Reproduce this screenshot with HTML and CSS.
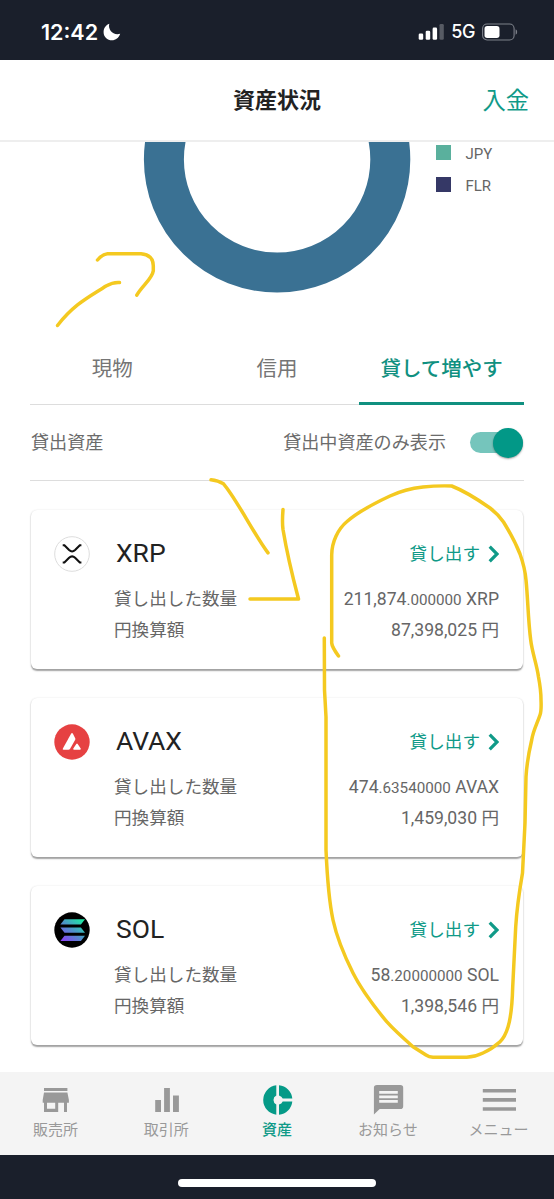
FILE: index.html
```html
<!DOCTYPE html>
<html lang="ja">
<head>
<meta charset="utf-8">
<title>資産状況</title>
<link rel="stylesheet" href="styles.css">
</head>
<body>
<div class="screen">
  <div class="status">
    <div class="clock">12:42
      <svg class="moon" width="18" height="18" viewBox="0 0 18 18"><path d="M6.3.8C4.6 6.8 10.4 13 17.2 10.8 15.8 15 12.6 17.300 9 17.300 4.300 17.300.6 13.700.6 9.200.6 5.300 2.800 2 6.300.8Z" fill="#fff"/></svg>
    </div>
    <div class="signal">
      <svg width="26" height="16" viewBox="0 0 26 16"><g fill="#fff"><rect x=".7" y="9.500" width="4.500" height="6.200" rx="1.300"/><rect x="7.700" y="6.800" width="4.500" height="8.900" rx="1.300"/><rect x="14.600" y="3.600" width="4.500" height="12.100" rx="1.300"/><rect x="21.500" y="0" width="4.300" height="15.700" rx="1.300" opacity=".27"/></g></svg>
      <span class="net">5G</span>
      <svg width="36" height="18" viewBox="0 0 36 18"><rect x=".6" y="1" width="31.500" height="16" rx="4.500" fill="none" stroke="#7d818a" stroke-width="1.100"/><rect x="2.500" y="3" width="15" height="12" rx="2.700" fill="#fff"/><path d="M33.600 6.200q1.600.8 1.600 2.800t-1.600 2.800z" fill="#7d818a"/></svg>
    </div>
  </div>

  <header class="header">
    <h1 class="title">資産状況</h1>
    <span class="deposit">入金</span>
  </header>

  <section class="chart">
    <svg class="donut" width="268" height="152" viewBox="143 142 268 152"><circle cx="277.100" cy="159.400" r="113.200" fill="none" stroke="#3a7193" stroke-width="40"/></svg>
    <ul class="legend">
      <li class="key"><i class="swatch jpy"></i>JPY</li>
      <li class="key"><i class="swatch flr"></i>FLR</li>
    </ul>
  </section>

  <nav class="tabs">
    <span class="tab">現物</span><span class="tab">信用</span><span class="tab active">貸して増やす</span>
  </nav>

  <div class="filter">
    <span class="caption">貸出資産</span>
    <span class="caption only">貸出中資産のみ表示</span>
    <span class="toggle"><i class="knob"></i></span>
  </div>

  <main class="cards">
    <article class="card">
      <svg class="coin" width="36" height="36" viewBox="0 0 36 36"><circle cx="18" cy="18" r="17.300" fill="#fff" stroke="#ddd" stroke-width="1"/><g fill="none" stroke="#111" stroke-width="2.100"><path d="M8.700 9.200h1.700l4.700 4.900q3 2.800 6 0l4.700-4.900h1.600"/><path d="M8.700 26.500h1.700l4.700-4.800q3-2.800 6 0l4.700 4.800h1.600"/></g></svg>
      <div class="info">
        <div class="line head"><span class="symbol">XRP</span><span class="lend">貸し出す<svg class="chev" width="11" height="18" viewBox="0 0 11 18"><path d="M1.700 1.700 9 9l-7.300 7.300" fill="none" stroke="#109a88" stroke-width="3.200"/></svg></span></div>
        <div class="line"><span>貸し出した数量</span><span class="value">211,874<small class="dec">.000000</small> XRP</span></div>
        <div class="line"><span>円換算額</span><span class="value">87,398,025 円</span></div>
      </div>
    </article>
    <article class="card">
      <svg class="coin" width="36" height="36" viewBox="0 0 36 36"><circle cx="18" cy="18" r="17.700" fill="#e64142"/><g fill="#fff"><path d="M17.200 9.600q.8-1.200 1.600 0l2.300 4.300q.5 1 0 2l-5 8.800q-.6 1-1.700 1H9.700q-1.500 0-.8-1.300Z"/><path d="M22.300 20q.7-1.100 1.400 0l3 4.600q.6 1.100-.7 1.100h-6q-1.300 0-.7-1.100Z"/></g></svg>
      <div class="info">
        <div class="line head"><span class="symbol">AVAX</span><span class="lend">貸し出す<svg class="chev" width="11" height="18" viewBox="0 0 11 18"><path d="M1.700 1.700 9 9l-7.300 7.300" fill="none" stroke="#109a88" stroke-width="3.200"/></svg></span></div>
        <div class="line"><span>貸し出した数量</span><span class="value">474<small class="dec">.63540000</small> AVAX</span></div>
        <div class="line"><span>円換算額</span><span class="value">1,459,030 円</span></div>
      </div>
    </article>
    <article class="card">
      <svg class="coin" width="36" height="36" viewBox="0 0 36 36"><defs><linearGradient id="sol" gradientUnits="userSpaceOnUse" x1="9" y1="29" x2="27" y2="7"><stop offset="0" stop-color="#8a43f5"/><stop offset=".5" stop-color="#4e91c9"/><stop offset="1" stop-color="#1fe8a4"/></linearGradient></defs><circle cx="18" cy="18" r="17.700" fill="#000"/><g fill="url(#sol)"><path d="M10.500 7.300H31l-4.100 5.200H6.400Z"/><path d="M6.400 15.500h20.500l4.100 5.200H10.500Z"/><path d="M10.500 23.700H31l-4.100 5.200H6.400Z"/></g></svg>
      <div class="info">
        <div class="line head"><span class="symbol">SOL</span><span class="lend">貸し出す<svg class="chev" width="11" height="18" viewBox="0 0 11 18"><path d="M1.700 1.700 9 9l-7.300 7.300" fill="none" stroke="#109a88" stroke-width="3.200"/></svg></span></div>
        <div class="line"><span>貸し出した数量</span><span class="value">58<small class="dec">.20000000</small> SOL</span></div>
        <div class="line"><span>円換算額</span><span class="value">1,398,546 円</span></div>
      </div>
    </article>
  </main>

  <nav class="bottom">
    <div class="item"><svg width="36" height="32" viewBox="0 0 36 32"><path fill="#999" fill-rule="evenodd" d="M5.300 4h23.400v3H5.300ZM5.300 8.600h23.400l1.500 7.400v2.700h-1.900V28h-3v-9.300h-5.800V28H5.300v-9.300H4V16ZM8.300 18.700v6h8.200v-6Z" transform="translate(1.700 0)"/></svg>販売所</div>
    <div class="item"><svg width="36" height="32" viewBox="0 0 36 32"><path fill="#999" transform="translate(.7 0)" d="M6.500 16h5.800v12H6.500ZM15.400 4h5.800v24h-5.800ZM24.300 11.500h5.900V28h-5.900Z"/></svg>取引所</div>
    <div class="item on"><svg width="36" height="32" viewBox="0 0 36 32"><g fill="#059a87" transform="translate(.5 0)"><path d="M16.800 1.300v10.200a5 5 0 0 0 0 9v10.200a14.800 14.800 0 0 1 0-29.400Z"/><path d="M19.500 1.300a14.800 14.800 0 0 1 13.300 13.300H23.200q-.9-2.200-3.700-3.100ZM32.800 17.400A14.800 14.800 0 0 1 19.500 30.700V20.500q2.800-.9 3.700-3.100Z"/></g></svg>資産</div>
    <div class="item"><svg width="36" height="32" viewBox="0 0 36 32"><path fill="#999" fill-rule="evenodd" transform="translate(.7 0)" d="M6.300 1h23.400q2.800 0 2.800 2.800v18.400q0 2.800-2.800 2.800H9l-5.800 5.400V3.800Q3.200 1 6.300 1ZM8.500 7v2.700h18.600V7ZM8.500 11.500v2.700h18.600v-2.700ZM8.500 16v2.700h18.600V16Z"/></svg>お知らせ</div>
    <div class="item"><svg width="36" height="32" viewBox="0 0 36 32"><path fill="#999" d="M1.800 5h33.200v3.600H1.800ZM1.800 14.100h33.200v3.600H1.800ZM1.800 23.200h33.200v3.600H1.800Z"/></svg>メニュー</div>
  </nav>
  <footer class="home"><i class="bar"></i></footer>

  <svg class="marks" width="554" height="1199" viewBox="0 0 554 1199">
    <path d="M97.500 260q5-6 10-6.300h33.500q12 1 12.300 12v5c-1 8-11 15-16.500 24.500"/>
    <path d="M57.500 325.500C75 303 91 296 106 286q7-4 13.500-3.500"/>
    <path d="M211 479.800q7 .6 12.500 4c13 15 32 53 44.500 69"/>
    <path d="M283 509.500q-1 13 0 20c4 24 9 45 15.500 69.500H250"/>
    <path d="M338.500 656Q332 647 331.700 643V555C331.700 542 338 529 347 521.500C359 511 375 503 390 496Q405 489 423 487Q437 485.500 451.700 486C462 490 480 501 490 508Q498 514 503.500 522Q514 539 520 554Q525 568 526 580C528 600 528 619 530.700 640C532 652 537 665 538.500 677Q541 690 541 700Q541.500 711 540 715C537 724 533 731 531.700 740Q527 760 526 777L525 823L522.500 873Q517 905 515.700 927L512.700 987Q512 1014 508 1027Q505 1037 500 1041.700Q492 1049 483 1053Q475 1057 466.700 1057.300H433Q429 1057 426 1055L413 1046.700C403 1038 395 1031 386.700 1021.700Q363 993 353 973Q338 943 333 920C329 901 327 873 326 850V717L324.500 690L324.300 638"/>
  </svg>
</div>
</body>
</html>
```
FILE: styles.css
```css
* { box-sizing: border-box; }
body {
  margin: 0;
  background: #fff;
  color: #666;
  font-family: Roboto, "Noto Sans CJK JP", sans-serif;
}
.screen {
  position: relative;
  display: flex;
  flex-direction: column;
  width: 554px;
  height: 1199px;
  overflow: hidden;
}
.status {
  height: 60px;
  padding: 3px 36px 0 41px;
  display: flex;
  align-items: center;
  justify-content: space-between;
  background: #1a1f2b;
  color: #fff;
  font-family: Inter, sans-serif;
}
.clock { display: flex; align-items: center; gap: 5px; font-size: 21.500px; font-weight: 600; }
.signal { display: flex; align-items: center; gap: 7px; }
.net { font-size: 18px; font-weight: 500; letter-spacing: -.4px; }
.header {
  height: 82px;
  padding: 1px 25px 0;
  display: grid;
  grid-template-columns: 1fr auto 1fr;
  align-items: center;
  border-bottom: 2px solid #eee;
}
.title { grid-column: 2; margin: 0; color: #222; font-size: 22px; font-weight: 700; line-height: 30px; }
.deposit { justify-self: end; color: #109a88; font-size: 23.300px; line-height: 30px; }
.chart { height: 190px; padding-left: 143px; display: flex; align-items: flex-start; gap: 25px; }
.donut { display: block; }
.legend { margin: 0; padding: 0; list-style: none; }
.key { height: 32px; padding-bottom: 8px; display: flex; align-items: center; gap: 14.500px; font-size: 15px; line-height: 23px; }
.swatch { width: 15px; height: 15px; margin-top: -3px; }
.jpy { background: #5ab09d; }
.flr { background: #353866; }
.tabs { height: 73px; margin: 0 30px; display: grid; grid-template-columns: repeat(3, 1fr); border-bottom: 1px solid #ddd; }
.tab { height: 73px; padding-bottom: 3px; display: flex; align-items: center; justify-content: center; font-size: 20.500px; color: #757575; }
.active { color: #109080; font-weight: 500; border-bottom: 3px solid #109080; padding-bottom: 0; }
.filter { height: 76px; margin: 0 30px; padding: 0 1px; display: flex; align-items: center; font-size: 18.100px; color: #6b6b6b; border-bottom: 1px solid #ddd; }
.caption { padding-bottom: 3px; }
.only { margin-left: auto; }
.toggle { width: 53px; height: 21px; margin-left: 24px; display: flex; align-items: center; justify-content: flex-end; border-radius: 11px; background: #75c5bc; }
.knob { width: 30px; height: 30px; border-radius: 50%; background: #029887; box-shadow: 0 1px 2px rgba(0, 0, 0, .35); }
.cards { height: 591px; padding: 29px 31px 0; display: flex; flex-direction: column; gap: 29px; }
.card {
  height: 159px;
  padding: 26px 24px 0 23px;
  display: flex;
  flex: none;
  gap: 24px;
  border-radius: 6px;
  background: #fff;
  box-shadow: 0 1.500px 1.500px rgba(0, 0, 0, .36), 0 0 2px rgba(0, 0, 0, .08);
}
.coin { flex: none; }
.info { flex: 1; }
.line { height: 31px; display: flex; align-items: center; justify-content: space-between; font-size: 17.600px; line-height: 31px; }
.head { height: 33px; margin-bottom: 15px; padding-left: 2px; }
.symbol { color: #222; font-size: 26.500px; line-height: 33px; }
.lend { display: flex; align-items: center; gap: 8px; padding-top: 3px; color: #109a88; }
.chev { margin-top: -1px; }
.value { font-size: 17.600px; }
.dec { font-size: 15.200px; }
.bottom { height: 83px; padding-top: 12px; display: grid; grid-template-columns: repeat(5, 1fr); background: #f4f4f4; }
.item { display: flex; flex-direction: column; align-items: center; gap: 3px; color: #999; font-size: 15px; line-height: 22px; }
.on { color: #109a88; font-weight: 500; }
.home { height: 44px; padding-top: 24px; display: flex; justify-content: center; background: #1a1f2b; }
.bar { width: 198px; height: 8px; border-radius: 4px; background: #fff; }
.marks { position: absolute; top: 0; left: 0; fill: none; stroke: #f4c920; stroke-width: 3.500; stroke-linecap: round; stroke-linejoin: round; }
```
